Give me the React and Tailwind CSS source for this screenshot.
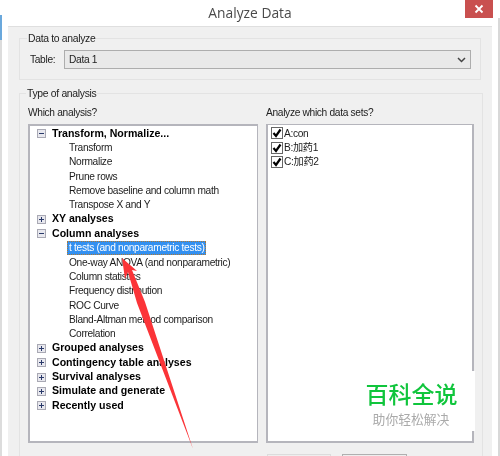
const sans = "font-['Liberation_Sans','Noto_Sans_CJK_SC',sans-serif]";

const tree = [
  { label: "Transform, Normalize...", open: true, children: ["Transform", "Normalize", "Prune rows", "Remove baseline and column math", "Transpose X and Y"] },
  { label: "XY analyses" },
  { label: "Column analyses", open: true, children: ["t tests (and nonparametric tests)", "One-way ANOVA (and nonparametric)", "Column statistics", "Frequency distribution", "ROC Curve", "Bland-Altman method comparison", "Correlation"] },
  { label: "Grouped analyses" },
  { label: "Contingency table analyses" },
  { label: "Survival analyses" },
  { label: "Simulate and generate" },
  { label: "Recently used" },
];

const dataSets = ["A:con", "B:加药1", "C:加药2"];

const Expander = ({ open }) => (
  <svg width="9" height="9" viewBox="0 0 9 9" className="shrink-0">
    <rect x="0.5" y="0.5" width="8" height="8" fill="#e8e8ee" stroke="#a9a9b4" />
    <path d={open ? "M2 4.5H7" : "M2 4.5H7M4.5 2V7"} stroke="#2a3a6a" fill="none" />
  </svg>
);

const TreeRow = ({ label, open }) => (
  <div className="flex items-center h-[14.33px]">
    <Expander open={open} />
    <span className="ml-[6px] font-bold text-[10.6px] tracking-normal text-black whitespace-nowrap">{label}</span>
  </div>
);

const ChildRow = ({ label }) => {
  const selected = label.startsWith("t tests");
  return (
    <div className="flex items-center h-[14.33px] pl-[32px]">
      <span className={selected
        ? "-ml-[2px] pl-[2px] pr-[1px] h-[14px] leading-[13px] bg-[#3390f0] text-white outline-1 outline-dotted outline-[#b07830] -outline-offset-1 whitespace-nowrap"
        : "whitespace-nowrap text-[#1c1c1c]"}>{label}</span>
    </div>
  );
};

const CheckRow = ({ label }) => (
  <div className="flex items-center h-[14.33px]">
    <span className="flex items-center justify-center w-[12px] h-[12px] bg-white border border-[#666] shrink-0">
      <svg width="10" height="10" viewBox="0 0 10 10">
        <path d="M1.5 5L4 8L8.5 1.5" stroke="#000" strokeWidth="2.2" fill="none" />
      </svg>
    </span>
    <span className="ml-[1px] text-[#1c1c1c] whitespace-nowrap">{label}</span>
  </div>
);

const Arrow = () => (
  <svg width="500" height="456" viewBox="0 0 500 456" className="absolute left-0 top-0 pointer-events-none">
    <polygon points="122,258 137,271 132,270 145,302 193,449 137,303 128,272 125,279" fill="#fb3438" />
  </svg>
);

export default function App() {
  return (
    <div className={`relative w-[500px] h-[456px] overflow-hidden bg-white ${sans} text-[10.2px] tracking-[-0.32px] text-[#222] blur-[0.3px]`}>
      {/* window chrome */}
      <div className="absolute left-0 top-[15px] w-[2px] h-[25px] bg-[#6aa8dc]" />
      <div className="absolute left-0 top-[40px] w-[2px] h-[416px] bg-[#dcdcdc]" />
      <div className="absolute right-0 top-[18px] w-[2px] h-[438px] bg-[#d8d8d8]" />

      <div className="relative h-[26px] flex items-center justify-center font-['Open_Sans'] text-[13.8px] tracking-normal text-[#4a4a4a]">
        Analyze Data
        <div className="absolute right-[7px] top-0 w-[28px] h-[18px] bg-[#c9504f] flex items-center justify-center">
          <svg width="10" height="10" viewBox="0 0 10 10">
            <path d="M1.5 1.5L8.5 8.5M8.5 1.5L1.5 8.5" stroke="#fff" strokeWidth="1.8" />
          </svg>
        </div>
      </div>

      <div className="mx-[8px] h-[430px] bg-[#f0f0f0] border-t border-[#dfdfdf] px-[11px] pt-[6px]">
        <fieldset className="h-[47px] border border-[#e3e3e3] px-[9px]">
          <legend className="ml-[-2px] px-[1px] text-[10.4px] leading-[11px]">Data to analyze</legend>
          <div className="flex items-center mt-[6px]">
            <span className="w-[35px] pl-[1px]">Table:</span>
            <div className="flex-1 h-[19px] flex items-center justify-between pl-[4px] pr-[3px] border border-[#adadad] bg-[#e9e9e9]">
              <span>Data 1</span>
              <svg width="9" height="6" viewBox="0 0 9 6" className="mr-[1px]">
                <path d="M1 1L4.5 4.5L8 1" stroke="#444" strokeWidth="1.5" fill="none" />
              </svg>
            </div>
          </div>
        </fieldset>

        <fieldset className="mt-[8px] h-[380px] border border-[#e3e3e3] px-[8px]">
          <legend className="ml-[-2px] px-[1px] text-[10.4px] leading-[11px]">Type of analysis</legend>
          <div className="grid grid-cols-[230px_208px] gap-x-[8px] mt-[6px]">
            <div>Which analysis?</div>
            <div>Analyze which data sets?</div>
            <div className="mt-[4px] h-[319px] bg-white border-2 border-[#b5b5bc] border-r-1 pl-[7px]">
              {tree.map((node) => (
                <div key={node.label}>
                  <TreeRow label={node.label} open={node.open} />
                  {node.children && node.children.map((c) => <ChildRow key={c} label={c} />)}
                </div>
              ))}
            </div>
            <div className="mt-[4px] h-[319px] bg-white border-2 border-[#b5b5bc] border-t-1 pl-[3px] pt-[1px]">
              {dataSets.map((d) => <CheckRow key={d} label={d} />)}
            </div>
          </div>
          <div className="flex gap-[11px] mt-[11px] ml-[239px]">
            <div className="w-[64px] h-[20px] bg-[#eeeeee] border border-[#dcdcdc]" />
            <div className="w-[65px] h-[20px] bg-[#eeeeee] border border-[#b0b0b0]" />
          </div>
        </fieldset>
      </div>

      {/* watermark */}
      <div className="absolute left-[355px] top-[371px] w-[120px] h-[60px] bg-white flex flex-col items-center pt-[7px] tracking-normal">
        <div className="font-['Noto_Sans_CJK_SC'] font-medium text-[23px] leading-[30px] text-[#10c53c] pr-[7px]">百科全说</div>
        <div className="mt-[4px] font-['Noto_Sans_CJK_SC'] text-[12.8px] leading-[14px] text-[#aaaaaa] pr-[8px]">助你轻松解决</div>
      </div>

      <Arrow />
    </div>
  );
}
